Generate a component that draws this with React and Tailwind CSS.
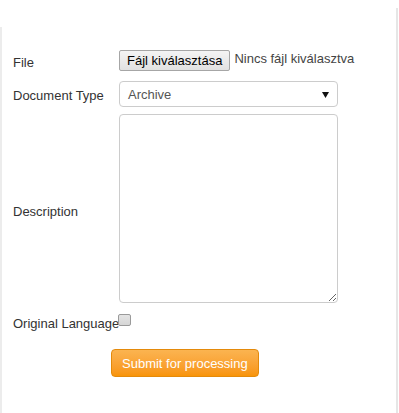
const labelCls = "w-[106px] shrink-0 whitespace-nowrap text-[13px] leading-[15px] text-[#333]";

const App = () => {
  return (
    <div className="flex w-[399px] h-[413px] bg-white font-['Liberation_Sans',Arial,sans-serif]">
      <div className="w-[2px] mt-[27px] bg-[#ececec]" />

      <div className="flex-1 pl-[11px] pt-[50px]">
        {/* File */}
        <div className="flex items-start h-[20px]">
          <div className={`${labelCls} mt-[5px]`}>File</div>
          <div className="flex items-start">
            <div className="h-[21px] px-[7px] border border-[#a6a6a6] rounded-[2px] bg-gradient-to-b from-[#f4f4f4] to-[#e1e1e1] text-[13px] leading-[19px] text-black">
              Fájl kiválasztása
            </div>
            <span className="ml-[4px] mt-[1px] text-[13px] leading-[15px] text-[#444]">
              Nincs fájl kiválasztva
            </span>
          </div>
        </div>

        {/* Document Type */}
        <div className="flex items-start mt-[11px]">
          <div className={`${labelCls} mt-[7px]`}>Document Type</div>
          <div className="flex items-center justify-between w-[219px] h-[26px] pl-[8px] pr-[8px] border border-[#ccc] rounded-[4px] bg-white">
            <span className="text-[13px] leading-[15px] text-[#555]">Archive</span>
            <svg width="7" height="6" viewBox="0 0 7 6" className="mt-[1px]">
              <path d="M0 0h7L3.5 6z" fill="#111" />
            </svg>
          </div>
        </div>

        {/* Description */}
        <div className="flex items-start mt-[7px]">
          <div className={`${labelCls} mt-[90px]`}>Description</div>
          <textarea className="w-[219px] h-[189px] border border-[#ccc] rounded-[4px] bg-white outline-none" />
        </div>

        {/* Original Language */}
        <div className="flex items-start mt-[10px]">
          <div className={`${labelCls} mt-[3px]`}>Original Language</div>
          <div className="w-[13px] h-[12px] mt-[1px] -ml-[1px] border border-[#9a9a9a] rounded-[2px] bg-gradient-to-b from-[#e4e4e4] to-[#d6d6d6]" />
        </div>

        {/* Submit */}
        <div className="mt-[18px] pl-[98px]">
          <button className="h-[28px] px-[10px] border border-[#e48a0b] rounded-[4px] bg-gradient-to-b from-[#fbb450] to-[#f89406] text-[13px] leading-[15px] text-white">
            Submit for processing
          </button>
        </div>
      </div>

      <div className="w-[2px] mt-[8px] mr-[1px] bg-[#e6e6e6]" />
    </div>
  );
};

export default App;
